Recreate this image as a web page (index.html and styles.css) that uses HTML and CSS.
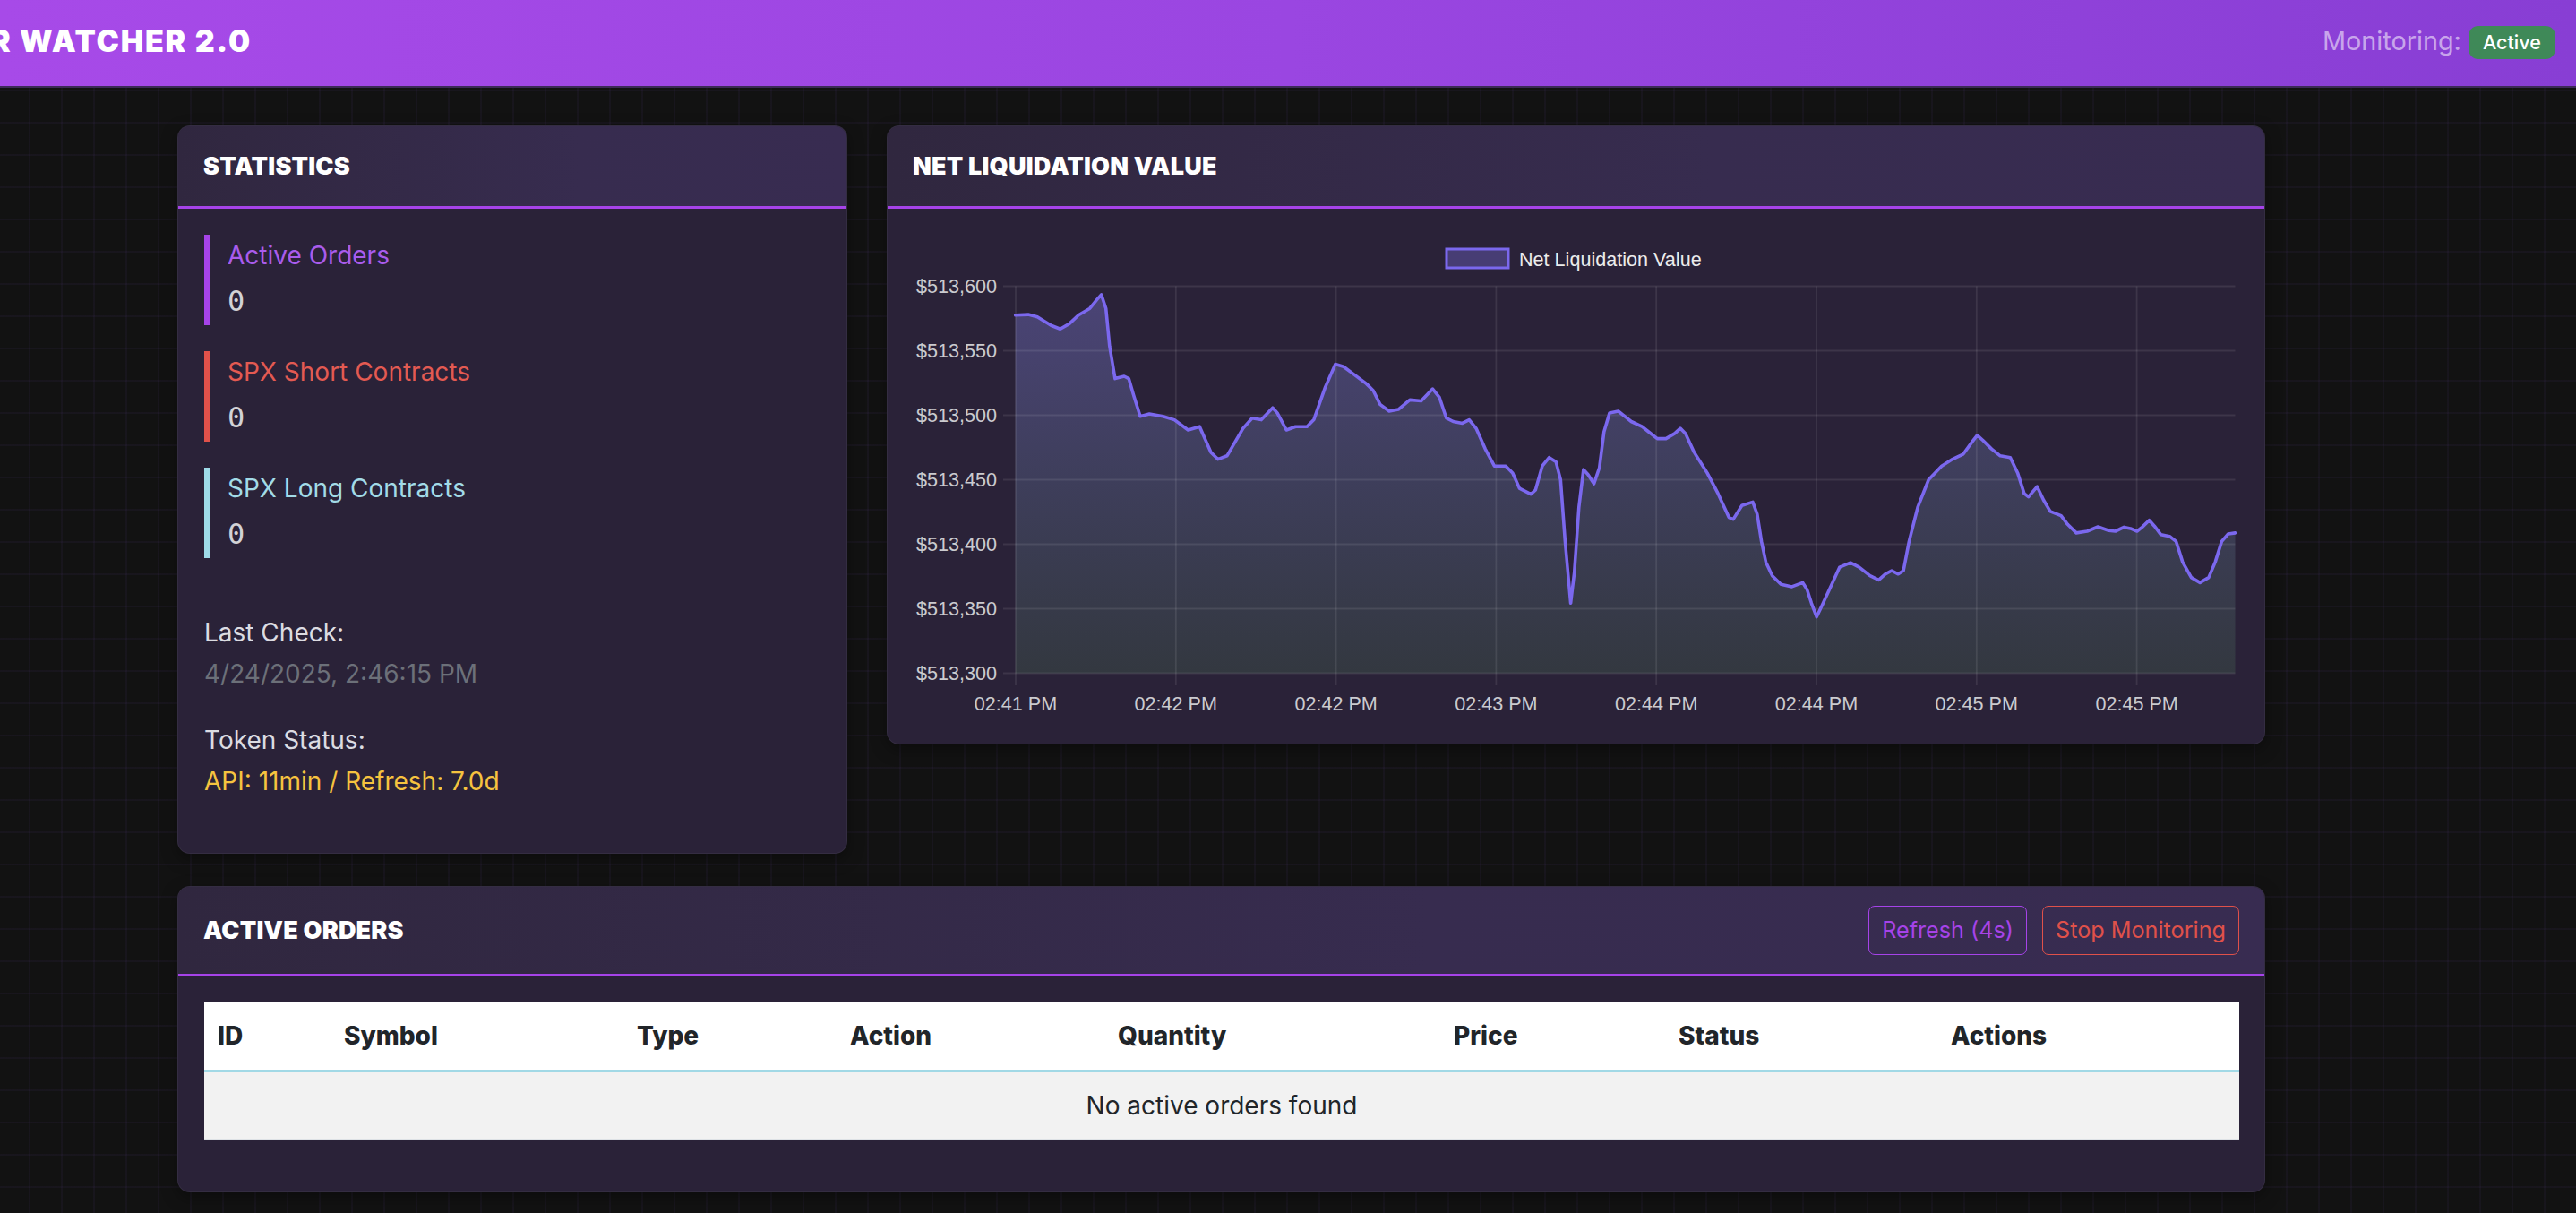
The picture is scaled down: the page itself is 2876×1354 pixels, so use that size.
FILE: index.html
```html
<!DOCTYPE html>
<html lang="en">
<head>
<meta charset="utf-8">
<title>Order Watcher 2.0</title>
<link rel="stylesheet" href="styles.css">
</head>
<body>
<header class="topbar">
  <div class="brand">R WATCHER 2.0</div>
  <div class="monitor">
    <span class="monitor-label">Monitoring:</span>
    <span class="badge">Active</span>
  </div>
</header>

<main class="dashboard">
  <section class="card stats-card">
    <div class="card-header"><h2 class="card-title">STATISTICS</h2></div>
    <div class="stats-body">
      <div class="stat stat-purple">
        <div class="stat-label">Active Orders</div>
        <div class="stat-value">0</div>
      </div>
      <div class="stat stat-red">
        <div class="stat-label">SPX Short Contracts</div>
        <div class="stat-value">0</div>
      </div>
      <div class="stat stat-cyan">
        <div class="stat-label">SPX Long Contracts</div>
        <div class="stat-value">0</div>
      </div>
      <div class="meta">
        <div class="meta-label">Last Check:</div>
        <div class="meta-date">4/24/2025, 2:46:15 PM</div>
        <div class="meta-label meta-gap">Token Status:</div>
        <div class="meta-token">API: 11min / Refresh: 7.0d</div>
      </div>
    </div>
  </section>

  <section class="card chart-card">
    <div class="card-header"><h2 class="card-title">NET LIQUIDATION VALUE</h2></div>
    <div class="chart-body">
      <svg class="chart" viewBox="991 233 1537 597" width="1537" height="597" xmlns="http://www.w3.org/2000/svg">
        <defs>
          <linearGradient id="fillGrad" x1="0" y1="319" x2="0" y2="752" gradientUnits="userSpaceOnUse">
            <stop offset="0" stop-color="#4b4477"/>
            <stop offset="0.5" stop-color="#3e3e5b"/>
            <stop offset="1" stop-color="#333840"/>
          </linearGradient>
        </defs>
        <rect x="1615" y="278" width="69" height="21" fill="#473d74" stroke="#7b68ee" stroke-width="3"/>
        <text class="legend-text" x="1696" y="297">Net Liquidation Value</text>

        <path fill="url(#fillGrad)" d="M1133.7 351.8 L1148 351.1 L1158.2 353.8 L1173.5 363.3 L1183.7 367.2 L1193.9 361.4 L1204.1 351.8 L1216.8 344.2 L1224.5 334.6 L1229.6 328.9 L1234.7 344.2 L1238.8 386.3 L1244.9 422.6 L1255.1 420 L1260.2 422.6 L1265.3 439.9 L1273 464.7 L1283.2 462.1 L1298.5 464.7 L1311.2 468.6 L1326.5 480 L1339.3 476.2 L1352 504.9 L1359.7 512.6 L1369.9 508.8 L1387.8 478.1 L1398 466.7 L1408.2 468.6 L1420.9 455.2 L1426 460.9 L1436.2 480 L1446.4 476.2 L1459.2 476.2 L1466.8 468.6 L1479.6 432.2 L1490.8 406.6 L1500 409.3 L1510.2 416.9 L1525.5 428.4 L1533.2 436 L1540.8 451.4 L1551 459 L1561.2 457.1 L1574 446.4 L1586.7 447.5 L1599.5 434.1 L1607.1 443.7 L1614.8 466.7 L1622.4 470.5 L1632.7 472.4 L1640.3 468.6 L1648 478.1 L1658.2 501.1 L1668.4 520.2 L1681.1 520.2 L1688.8 527.9 L1696.4 545.1 L1709.2 551.6 L1714.3 547 L1721.9 520.2 L1729.6 510.7 L1737.2 515.6 L1742.3 535.5 L1747.4 604.4 L1753.6 673.3 L1757.7 638.9 L1762.8 566.2 L1767.9 524.1 L1773 529.8 L1779.6 540 L1785.7 522 L1790.8 482 L1797 460.9 L1806.7 459 L1813.9 464.7 L1821.2 470.5 L1833.3 476.2 L1840.6 482 L1850.3 489.6 L1860 489.6 L1869.7 483.9 L1876 478.1 L1881.8 483.9 L1891.5 504.9 L1906 527.9 L1918.1 550.9 L1930.3 577.6 L1935.1 579.6 L1944.8 564.2 L1956.9 560.4 L1961.8 573.8 L1966.6 604.4 L1971.5 627.4 L1978.7 642.7 L1988.4 652.3 L2000.6 654.9 L2012.7 650.4 L2017.5 658 L2022.4 673.3 L2028.2 688.6 L2034.5 675.2 L2044.2 654.2 L2053.9 633.1 L2066 628.2 L2075.7 633.1 L2087.8 642.7 L2097.5 647.3 L2104.8 640.8 L2112 637 L2119.3 640.8 L2125.1 637 L2131.4 604.4 L2141.1 566.2 L2153.2 535.5 L2167.8 520.2 L2179.9 512.6 L2192 506.8 L2201.7 493.4 L2207.5 485.8 L2213.8 491.5 L2223.5 501.1 L2233.2 508.8 L2244.4 510.7 L2252.6 527.9 L2259.9 550.9 L2264.7 554.7 L2274.4 543.2 L2281.7 558.5 L2289 570.8 L2301.1 575.7 L2308.4 585.3 L2318.1 594.9 L2330.2 593 L2342.3 588 L2354.4 592.2 L2361.7 593 L2371.4 588.4 L2378.6 589.9 L2385.9 593 L2391.7 588.4 L2399.5 580.7 L2405.3 587.2 L2412.6 596.8 L2422.3 598.7 L2429.5 604.4 L2436.8 627.4 L2446.5 644.6 L2456.2 650.4 L2465.9 644.6 L2473.2 627.4 L2480.4 604.4 L2487.7 596 L2495.5 594.9 L2495.5 751.5 L1133.7 751.5 Z"/>

        <g class="grid">
          <line x1="1120" y1="319.5" x2="2495.5" y2="319.5"/>
          <line x1="1120" y1="391.5" x2="2495.5" y2="391.5"/>
          <line x1="1120" y1="463.5" x2="2495.5" y2="463.5"/>
          <line x1="1120" y1="535.5" x2="2495.5" y2="535.5"/>
          <line x1="1120" y1="607.5" x2="2495.5" y2="607.5"/>
          <line x1="1120" y1="679.5" x2="2495.5" y2="679.5"/>
          <line x1="1120" y1="751.5" x2="2495.5" y2="751.5"/>
          <line x1="1134" y1="319.5" x2="1134" y2="765"/>
          <line x1="1312.8" y1="319.5" x2="1312.8" y2="765"/>
          <line x1="1491.6" y1="319.5" x2="1491.6" y2="765"/>
          <line x1="1670.4" y1="319.5" x2="1670.4" y2="765"/>
          <line x1="1849.2" y1="319.5" x2="1849.2" y2="765"/>
          <line x1="2028" y1="319.5" x2="2028" y2="765"/>
          <line x1="2206.8" y1="319.5" x2="2206.8" y2="765"/>
          <line x1="2385.6" y1="319.5" x2="2385.6" y2="765"/>
        </g>

        <path class="series" d="M1133.7 351.8 L1148 351.1 L1158.2 353.8 L1173.5 363.3 L1183.7 367.2 L1193.9 361.4 L1204.1 351.8 L1216.8 344.2 L1224.5 334.6 L1229.6 328.9 L1234.7 344.2 L1238.8 386.3 L1244.9 422.6 L1255.1 420 L1260.2 422.6 L1265.3 439.9 L1273 464.7 L1283.2 462.1 L1298.5 464.7 L1311.2 468.6 L1326.5 480 L1339.3 476.2 L1352 504.9 L1359.7 512.6 L1369.9 508.8 L1387.8 478.1 L1398 466.7 L1408.2 468.6 L1420.9 455.2 L1426 460.9 L1436.2 480 L1446.4 476.2 L1459.2 476.2 L1466.8 468.6 L1479.6 432.2 L1490.8 406.6 L1500 409.3 L1510.2 416.9 L1525.5 428.4 L1533.2 436 L1540.8 451.4 L1551 459 L1561.2 457.1 L1574 446.4 L1586.7 447.5 L1599.5 434.1 L1607.1 443.7 L1614.8 466.7 L1622.4 470.5 L1632.7 472.4 L1640.3 468.6 L1648 478.1 L1658.2 501.1 L1668.4 520.2 L1681.1 520.2 L1688.8 527.9 L1696.4 545.1 L1709.2 551.6 L1714.3 547 L1721.9 520.2 L1729.6 510.7 L1737.2 515.6 L1742.3 535.5 L1747.4 604.4 L1753.6 673.3 L1757.7 638.9 L1762.8 566.2 L1767.9 524.1 L1773 529.8 L1779.6 540 L1785.7 522 L1790.8 482 L1797 460.9 L1806.7 459 L1813.9 464.7 L1821.2 470.5 L1833.3 476.2 L1840.6 482 L1850.3 489.6 L1860 489.6 L1869.7 483.9 L1876 478.1 L1881.8 483.9 L1891.5 504.9 L1906 527.9 L1918.1 550.9 L1930.3 577.6 L1935.1 579.6 L1944.8 564.2 L1956.9 560.4 L1961.8 573.8 L1966.6 604.4 L1971.5 627.4 L1978.7 642.7 L1988.4 652.3 L2000.6 654.9 L2012.7 650.4 L2017.5 658 L2022.4 673.3 L2028.2 688.6 L2034.5 675.2 L2044.2 654.2 L2053.9 633.1 L2066 628.2 L2075.7 633.1 L2087.8 642.7 L2097.5 647.3 L2104.8 640.8 L2112 637 L2119.3 640.8 L2125.1 637 L2131.4 604.4 L2141.1 566.2 L2153.2 535.5 L2167.8 520.2 L2179.9 512.6 L2192 506.8 L2201.7 493.4 L2207.5 485.8 L2213.8 491.5 L2223.5 501.1 L2233.2 508.8 L2244.4 510.7 L2252.6 527.9 L2259.9 550.9 L2264.7 554.7 L2274.4 543.2 L2281.7 558.5 L2289 570.8 L2301.1 575.7 L2308.4 585.3 L2318.1 594.9 L2330.2 593 L2342.3 588 L2354.4 592.2 L2361.7 593 L2371.4 588.4 L2378.6 589.9 L2385.9 593 L2391.7 588.4 L2399.5 580.7 L2405.3 587.2 L2412.6 596.8 L2422.3 598.7 L2429.5 604.4 L2436.8 627.4 L2446.5 644.6 L2456.2 650.4 L2465.9 644.6 L2473.2 627.4 L2480.4 604.4 L2487.7 596 L2495.5 594.9"/>

        <g class="tick tick-y">
          <text x="1113" y="327">$513,600</text>
          <text x="1113" y="399">$513,550</text>
          <text x="1113" y="471">$513,500</text>
          <text x="1113" y="543">$513,450</text>
          <text x="1113" y="615">$513,400</text>
          <text x="1113" y="687">$513,350</text>
          <text x="1113" y="759">$513,300</text>
        </g>
        <g class="tick tick-x">
          <text x="1134" y="793">02:41 PM</text>
          <text x="1312.8" y="793">02:42 PM</text>
          <text x="1491.6" y="793">02:42 PM</text>
          <text x="1670.4" y="793">02:43 PM</text>
          <text x="1849.2" y="793">02:44 PM</text>
          <text x="2028" y="793">02:44 PM</text>
          <text x="2206.8" y="793">02:45 PM</text>
          <text x="2385.6" y="793">02:45 PM</text>
        </g>
      </svg>
    </div>
  </section>

  <section class="card orders-card">
    <div class="card-header orders-header">
      <h2 class="card-title">ACTIVE ORDERS</h2>
      <div class="actions">
        <button class="btn btn-purple" type="button">Refresh (4s)</button>
        <button class="btn btn-red" type="button">Stop Monitoring</button>
      </div>
    </div>
    <div class="orders-body">
      <table class="orders-table">
        <thead>
          <tr>
            <th class="col-id">ID</th>
            <th class="col-symbol">Symbol</th>
            <th class="col-type">Type</th>
            <th class="col-action">Action</th>
            <th class="col-qty">Quantity</th>
            <th class="col-price">Price</th>
            <th class="col-status">Status</th>
            <th class="col-actions">Actions</th>
          </tr>
        </thead>
        <tbody>
          <tr>
            <td class="empty" colspan="8">No active orders found</td>
          </tr>
        </tbody>
      </table>
    </div>
  </section>
</main>
</body>
</html>
```

FILE: styles.css
```css
* {
  box-sizing: border-box;
}

html, body {
  margin: 0;
  padding: 0;
}

body {
  min-height: 1354px;
  background-color: #121212;
  background-image:
    linear-gradient(rgba(120, 80, 200, 0.06) 2px, transparent 2px),
    linear-gradient(90deg, rgba(120, 80, 200, 0.06) 2px, transparent 2px);
  background-size: 36px 36px;
  background-position: 32px 28px;
  font-family: "Inter", "Noto Sans", sans-serif;
  color: #e0e0e6;
  overflow: hidden;
}

/* ---------- top bar ---------- */
.topbar {
  height: 98px;
  padding: 0 23px 6px 0;
  display: flex;
  align-items: center;
  justify-content: space-between;
  background: linear-gradient(90deg, #a74ae8 0%, #9a46e1 50%, #883ed4 100%);
  border-bottom: 2px solid #3c2a57;
  overflow: hidden;
}

.brand {
  margin-left: -11px;
  font-size: 34px;
  font-weight: 900;
  letter-spacing: 1.8px;
  color: #ffffff;
  white-space: nowrap;
}

.monitor {
  display: flex;
  align-items: center;
  gap: 8px;
}

.monitor-label {
  font-size: 28.8px;
  color: rgba(255, 255, 255, 0.55);
}

.badge {
  margin-top: 4px;
  padding: 7px 16px;
  border-radius: 11px;
  background: #3f8958;
  color: #ffffff;
  font-size: 21.6px;
  line-height: 23px;
  font-weight: 500;
}

/* ---------- layout ---------- */
.dashboard {
  width: 2331px;
  margin: 42px 0 0 198px;
  display: grid;
  grid-template-columns: 748px 1539px;
  column-gap: 44px;
  row-gap: 36px;
  align-items: start;
}

.card {
  background: #2a2238;
  border: 1px solid rgba(255, 255, 255, 0.05);
  border-radius: 14px;
  overflow: hidden;
  box-shadow: 0 6px 18px rgba(0, 0, 0, 0.35);
}

.orders-card {
  grid-column: 1 / -1;
}

.card-header {
  min-height: 92px;
  padding: 0 28px;
  display: flex;
  align-items: center;
  justify-content: space-between;
  background: linear-gradient(90deg, #30273f 0%, #372c4f 60%, #382c51 100%);
  border-bottom: 3px solid #a643e9;
}

.card-title {
  margin: 0;
  font-size: 27px;
  font-weight: 900;
  letter-spacing: 0.2px;
  color: #ffffff;
  line-height: 43px;
}

/* ---------- statistics ---------- */
.stats-body {
  padding: 29px 29px 58px 29px;
}

.stat {
  border-left: 6px solid;
  padding: 2px 0 1px 20px;
  margin-bottom: 29px;
}

.stat-purple { border-color: #a643e9; color: #a95ced; }
.stat-red { border-color: #e0514a; color: #e35a52; }
.stat-cyan { border-color: #9edbe8; color: #a2dbe7; }

.stat-label {
  font-size: 28px;
  line-height: 43px;
}

.stat-value {
  margin-top: 4px;
  font-family: "DejaVu Sans Mono", "Liberation Mono", monospace;
  font-size: 32px;
  line-height: 51px;
  color: #d2d2d6;
}

.meta {
  margin-top: 62px;
}

.meta-label {
  font-size: 28px;
  line-height: 43px;
  color: #dcdce2;
}

.meta-gap {
  margin-top: 31px;
}

.meta-date {
  margin-top: 3px;
  font-size: 28px;
  line-height: 43px;
  color: #6c7079;
}

.meta-token {
  margin-top: 3px;
  font-size: 28px;
  line-height: 43px;
  color: #f6c33f;
}

/* ---------- chart ---------- */
.chart-body {
  height: 597px;
}

.chart {
  display: block;
}

.grid line {
  stroke: rgba(255, 255, 255, 0.09);
  stroke-width: 1.8;
}

.series {
  fill: none;
  stroke: #7b68ee;
  stroke-width: 3.6;
  stroke-linejoin: round;
  stroke-linecap: round;
}

.legend-text {
  font-family: "Liberation Sans", Arial, sans-serif;
  font-size: 21.6px;
  fill: #ececec;
}

.tick text {
  font-family: "Liberation Sans", Arial, sans-serif;
  font-size: 21.6px;
  fill: #cbcbcf;
}

.tick-y text {
  text-anchor: end;
}

.tick-x text {
  text-anchor: middle;
}

/* ---------- orders ---------- */
.orders-header {
  padding: 21px 28px;
}

.actions {
  display: flex;
  gap: 17px;
}

.btn {
  padding: 8px 14px;
  border: 1px solid;
  border-radius: 7px;
  background: transparent;
  font-family: "Inter", "Noto Sans", sans-serif;
  font-size: 25.2px;
  line-height: 37px;
  cursor: pointer;
}

.btn-purple {
  color: #a643e9;
  border-color: #a643e9;
}

.btn-red {
  color: #e0514a;
  border-color: #e0514a;
}

.orders-body {
  padding: 29px 28px 29px 29px;
}

.orders-table {
  width: 100%;
  margin-bottom: 29px;
  border-collapse: collapse;
  table-layout: fixed;
  color: #212529;
  font-size: 28px;
}

.orders-table th {
  padding: 16px 15px;
  text-align: left;
  font-weight: 800;
  line-height: 43px;
  background: #ffffff;
  border-bottom: 3px solid #a2d9e6;
}

.orders-table td {
  padding: 16px 15px;
  line-height: 42px;
  background: #f2f2f2;
  border-bottom: 1px solid #dee2e6;
}

.orders-table .empty {
  text-align: center;
}

.col-id { width: 141px; }
.col-symbol { width: 327px; }
.col-type { width: 238px; }
.col-action { width: 299px; }
.col-qty { width: 375px; }
.col-price { width: 251px; }
.col-status { width: 304px; }
.col-actions { width: auto; }
```
